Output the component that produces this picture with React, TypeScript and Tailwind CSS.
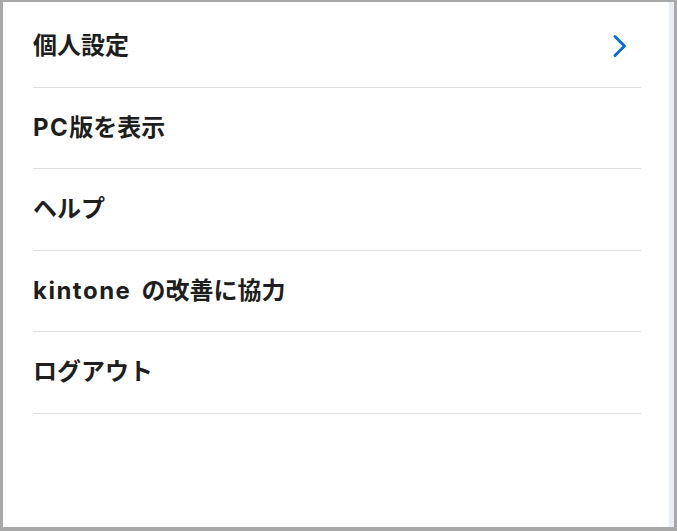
import type { ReactNode } from 'react';

const items: { key: string; label: ReactNode }[] = [
  { key: 'personal', label: '個人設定' },
  {
    key: 'pc',
    label: (
      <>
        <span className="tracking-[1.5px]">PC</span>版を表示
      </>
    ),
  },
  { key: 'help', label: 'ヘルプ' },
  {
    key: 'improve',
    label: (
      <>
        <span className="tracking-[1.5px]">kintone</span>
        <span className="ml-[10px]">の改善に協力</span>
      </>
    ),
  },
  { key: 'logout', label: 'ログアウト' },
];

export default function App() {
  return (
    <div className="w-[677px] h-[531px] bg-[#a8a8a8] pt-[2px] pl-[3px] pr-[3px] pb-[4px] flex">
      <div className="flex-1 bg-white pl-[30px] pr-[28px] pt-[4px]">
        {items.map((item, i) => (
          <div
            key={item.key}
            className="h-[81.5px] flex items-center justify-between border-b border-[#e0e0e0]"
          >
            <span
              className="text-[24px] font-bold text-[#1e1e1e] leading-none"
              style={{ fontFamily: 'Inter, "Noto Sans CJK JP", sans-serif' }}
            >
              {item.label}
            </span>
            {i === 0 && (
              <svg width="16" height="24" viewBox="0 0 16 24" className="mr-[13px]">
                <path d="M3 2.5 L12.5 12 L3 21.5" fill="none" stroke="#0b6cd3" strokeWidth="3" strokeLinecap="round" strokeLinejoin="round" />
              </svg>
            )}
          </div>
        ))}
      </div>
      <div className="w-[5px] bg-[#e9edf4]" />
    </div>
  );
}
